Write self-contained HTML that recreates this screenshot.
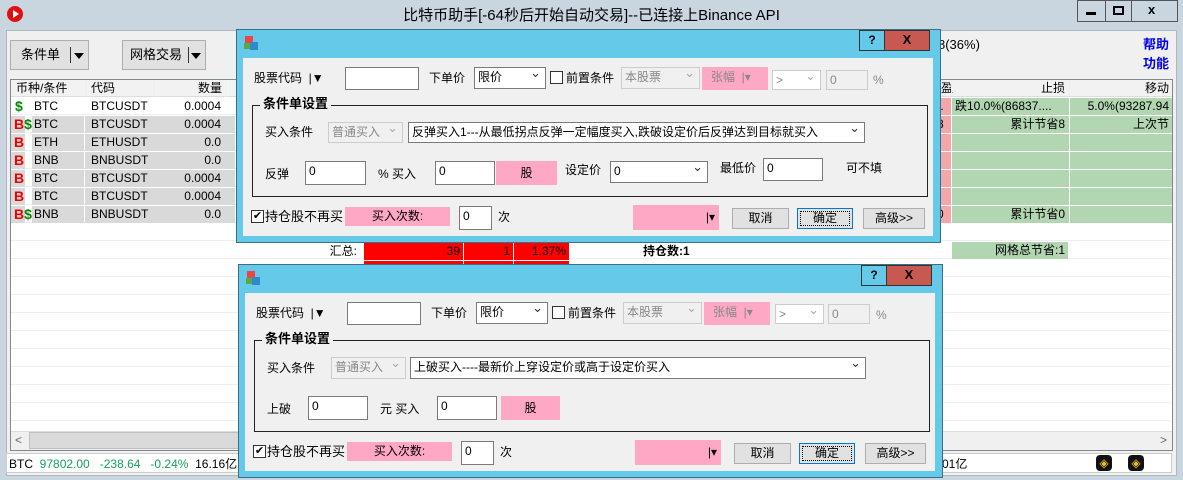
<!DOCTYPE html>
<html><head><meta charset="utf-8"><style>
*{box-sizing:border-box;margin:0;padding:0}
body{width:1183px;height:480px;overflow:hidden;background:#c9d6df;font-family:"Liberation Sans","Noto Sans CJK SC",sans-serif;font-size:12px;color:#000;position:relative}
.a{position:absolute}
.t{position:absolute;white-space:nowrap;line-height:14px}
.inp{position:absolute;background:#fff;border:1px solid #7a7a7a;padding:2px 3px;font-size:12px;line-height:14px}
.sel{position:absolute;background:#fff;border:1px solid #7a7a7a;padding:2px 3px;font-size:12px;line-height:15px}
.sel:after{content:"⌄";position:absolute;right:4px;top:-3px;font-size:13px;color:#333}
.dis{background:#f0f0f0;border-color:#ccc;color:#888}
.dis:after{color:#aaa}
.pink{position:absolute;background:#ffa8c6;text-align:center;line-height:20px}
.btn{position:absolute;background:#e1e1e1;border:1px solid #adadad;text-align:center;line-height:19px}
.cell{position:absolute;height:18px;line-height:18px;padding:0 3px;white-space:nowrap;overflow:hidden}
.dlg{position:absolute;background:#65c9e9;border:1px solid #3a6f88}
.client{position:absolute;background:#f0f0f0}
.grp{position:absolute;border:1px solid #222}
.chk{position:absolute;width:13px;height:13px;border:1px solid #333;background:#fff;font-size:11px;line-height:11px;text-align:center}
</style></head><body>
<!-- title bar -->
<div class="a" style="left:7px;top:6px;width:16px;height:16px;border-radius:50%;background:#e01010"></div>
<div class="a" style="left:13px;top:10px;width:0;height:0;border-left:6px solid #fff;border-top:4px solid transparent;border-bottom:4px solid transparent"></div>
<div class="t" style="left:0;width:1183px;text-align:center;top:7px;font-size:15px;line-height:18px">比特币助手[-64秒后开始自动交易]--已连接上Binance API</div>
<div class="a" style="left:1077px;top:0;width:101px;height:22px;border:1px solid #555;background:#c9d6df"></div>
<div class="a" style="left:1105px;top:0;width:1px;height:22px;background:#555"></div>
<div class="a" style="left:1131px;top:0;width:1px;height:22px;background:#555"></div>
<div class="a" style="left:1086px;top:12px;width:10px;height:3px;background:#000"></div>
<div class="a" style="left:1113px;top:6px;width:11px;height:9px;border:2px solid #000"></div>
<div class="t" style="left:1148px;top:3px;font-weight:bold;font-size:13px">x</div>
<!-- client -->
<div class="a" style="left:6px;top:30px;width:1171px;height:446px;background:#f0f0f0;border:1px solid #b0b8bd"></div>
<div class="btn" style="left:10px;top:40px;width:79px;height:30px;line-height:28px;text-align:left;padding-left:10px;font-size:13px">条件单<span class="a" style="left:59px;top:6px;width:1px;height:16px;background:#333"></span><span class="a" style="left:63px;top:12px;border-top:6px solid #000;border-left:5px solid transparent;border-right:5px solid transparent"></span></div>
<div class="btn" style="left:122px;top:40px;width:84px;height:30px;line-height:28px;text-align:left;padding-left:7px;font-size:13px">网格交易<span class="a" style="left:65px;top:6px;width:1px;height:16px;background:#333"></span><span class="a" style="left:68px;top:12px;border-top:6px solid #000;border-left:5px solid transparent;border-right:5px solid transparent"></span></div>
<div class="t" style="left:938px;top:38px;font-size:13px">8(36%)</div>
<div class="t" style="left:1143px;top:38px;color:#0000ee;font-weight:bold;font-size:13px">帮助</div>
<div class="t" style="left:1143px;top:57px;color:#0000ee;font-weight:bold;font-size:13px">功能</div>
<!-- grid -->
<div class="a" style="left:10px;top:79px;width:1163px;height:372px;background:#fff;border:1px solid #828790"></div>
<div class="a" style="left:11px;top:80px;width:1161px;height:17px;background:#f2f2f2;border-bottom:1px solid #ddd"></div>
<div class="cell" style="left:13px;top:79px">币种/条件</div>
<div class="cell" style="left:88px;top:79px">代码</div>
<div class="cell" style="left:153px;top:79px;width:72px;text-align:right">数量</div>
<div class="cell" style="left:938px;top:79px">盈</div>
<div class="cell" style="left:952px;top:79px;width:116px;text-align:right">止损</div>
<div class="cell" style="left:1070px;top:79px;width:102px;text-align:right">移动</div>
<div class="a" style="left:85px;top:80px;width:1px;height:350px;background:#eee"></div>
<div class="a" style="left:154px;top:80px;width:1px;height:350px;background:#eee"></div>
<div class="a" style="left:225px;top:80px;width:1px;height:350px;background:#eee"></div>
<div class="a" style="left:951px;top:80px;width:1px;height:350px;background:#eee"></div>
<div class="a" style="left:1069px;top:80px;width:1px;height:350px;background:#eee"></div>
<div class="a" style="left:11px;top:97px;width:1160px;height:333px;background:repeating-linear-gradient(#fff 0 17px,#eee 17px 18px)"></div>
<!-- rows -->
<div class="a" style="left:85px;top:116px;width:150px;height:108px;background:repeating-linear-gradient(#d9d9d9 0 17px,#fff 17px 18px)"></div>
<div class="a" style="left:11px;top:116px;width:14px;height:108px;background:repeating-linear-gradient(#d9d9d9 0 17px,#fff 17px 18px)"></div>
<div class="a" style="left:32px;top:116px;width:52px;height:108px;background:repeating-linear-gradient(#d9d9d9 0 17px,#fff 17px 18px)"></div>
<div class="a" style="left:940px;top:98px;width:11px;height:126px;background:repeating-linear-gradient(#f4a6a9 0 17px,#fff 17px 18px)"></div>
<div class="a" style="left:952px;top:98px;width:220px;height:126px;background:repeating-linear-gradient(#b2d5b2 0 17px,#fff 17px 18px)"></div>
<div class="a" style="left:1069px;top:98px;width:1px;height:126px;background:#fff"></div>
<div class="a" style="left:952px;top:242px;width:116px;height:17px;background:#b2d5b2"></div>
<div class="cell" style="left:952px;top:241px;width:116px;text-align:right">网格总节省:1</div>
<div class="cell" style="left:952px;top:97px;width:118px;">跌10.0%(86837....</div>
<div class="cell" style="left:1070px;top:97px;width:102px;text-align:right">5.0%(93287.94</div>
<div class="cell" style="left:952px;top:115px;width:116px;text-align:right">累计节省8</div>
<div class="cell" style="left:1070px;top:115px;width:102px;text-align:right">上次节</div>
<div class="cell" style="left:952px;top:205px;width:116px;text-align:right">累计节省0</div>
<div class="cell" style="left:934px;top:115px">8</div>
<div class="cell" style="left:934px;top:205px">0</div>
<div class="cell" style="left:934px;top:97px">..</div>

<div class="t" style="left:15px;top:99px;color:#080;font-weight:bold;font-size:14px">$</div>
<div class="t" style="left:14px;top:117px;color:#e00;font-weight:bold;font-size:14px">B<span style="color:#080">$</span></div>
<div class="t" style="left:14px;top:135px;color:#e00;font-weight:bold;font-size:14px">B</div>
<div class="t" style="left:14px;top:153px;color:#e00;font-weight:bold;font-size:14px">B</div>
<div class="t" style="left:14px;top:171px;color:#e00;font-weight:bold;font-size:14px">B</div>
<div class="t" style="left:14px;top:189px;color:#e00;font-weight:bold;font-size:14px">B</div>
<div class="t" style="left:14px;top:207px;color:#e00;font-weight:bold;font-size:14px">B<span style="color:#080">$</span></div>
<div class="cell" style="left:31px;top:97px">BTC</div><div class="cell" style="left:88px;top:97px">BTCUSDT</div><div class="cell" style="left:154px;top:97px;width:70px;text-align:right">0.0004</div>
<div class="cell" style="left:31px;top:115px">BTC</div><div class="cell" style="left:88px;top:115px">BTCUSDT</div><div class="cell" style="left:154px;top:115px;width:70px;text-align:right">0.0004</div>
<div class="cell" style="left:31px;top:133px">ETH</div><div class="cell" style="left:88px;top:133px">ETHUSDT</div><div class="cell" style="left:154px;top:133px;width:70px;text-align:right">0.0</div>
<div class="cell" style="left:31px;top:151px">BNB</div><div class="cell" style="left:88px;top:151px">BNBUSDT</div><div class="cell" style="left:154px;top:151px;width:70px;text-align:right">0.0</div>
<div class="cell" style="left:31px;top:169px">BTC</div><div class="cell" style="left:88px;top:169px">BTCUSDT</div><div class="cell" style="left:154px;top:169px;width:70px;text-align:right">0.0004</div>
<div class="cell" style="left:31px;top:187px">BTC</div><div class="cell" style="left:88px;top:187px">BTCUSDT</div><div class="cell" style="left:154px;top:187px;width:70px;text-align:right">0.0004</div>
<div class="cell" style="left:31px;top:205px">BNB</div><div class="cell" style="left:88px;top:205px">BNBUSDT</div><div class="cell" style="left:154px;top:205px;width:70px;text-align:right">0.0</div>
<!-- summary -->
<div class="cell" style="left:300px;top:242px;width:60px;text-align:right">汇总:</div>
<div class="a" style="left:364px;top:243px;width:205px;height:17px;background:#f00"></div>
<div class="a" style="left:364px;top:261px;width:205px;height:6px;background:#f00"></div>
<div class="a" style="left:463px;top:243px;width:1px;height:24px;background:#fff"></div>
<div class="a" style="left:513px;top:243px;width:1px;height:24px;background:#fff"></div>
<div class="cell" style="left:364px;top:242px;width:99px;text-align:right">39</div>
<div class="cell" style="left:464px;top:242px;width:49px;text-align:right">1</div>
<div class="cell" style="left:514px;top:242px;width:55px;text-align:right">1.37%</div>
<div class="cell" style="left:640px;top:242px;font-weight:bold">持仓数:1</div>
<!-- scrollbar -->
<div class="a" style="left:11px;top:431px;width:1161px;height:19px;background:#f0f0f0;border-top:1px solid #ddd"></div>
<div class="a" style="left:29px;top:432px;width:860px;height:17px;background:#dadada;border:1px solid #c0c0c0"></div>
<div class="t" style="left:15px;top:433px;color:#666">&lt;</div>
<div class="t" style="left:1160px;top:433px;color:#666">&gt;</div>
<!-- status bar -->
<div class="a" style="left:6px;top:453px;width:1166px;height:20px;background:#fff;border:1px solid #ccc"></div>
<div class="t" style="left:9px;top:457px">BTC <span style="color:#17a05a">&nbsp;97802.00 &nbsp;&nbsp;-238.64 &nbsp;&nbsp;-0.24%</span> &nbsp;16.16亿</div>
<div class="t" style="left:932px;top:457px">2.01亿</div>
<div class="a" style="left:1096px;top:455px;width:16px;height:16px;background:#111;border-radius:4px;color:#f3ba2f;font-size:12px;line-height:16px;text-align:center">◈</div>
<div class="a" style="left:1128px;top:455px;width:16px;height:16px;background:#111;border-radius:4px;color:#f3ba2f;font-size:12px;line-height:16px;text-align:center">◈</div>

<!-- dialog 1 -->
<div class="dlg" style="left:236px;top:29px;width:705px;height:214px"></div>
<div class="a" style="left:245px;top:36px;width:8px;height:8px;background:#e44"></div><div class="a" style="left:250px;top:42px;width:8px;height:8px;background:#38c"></div><div class="a" style="left:244px;top:43px;width:6px;height:6px;background:#5a4"></div>
<div class="a" style="left:859px;top:30px;width:26px;height:21px;background:#65c9e9;border:1px solid #333;font-weight:bold;text-align:center;line-height:19px">?</div>
<div class="a" style="left:884px;top:30px;width:46px;height:21px;background:#c75950;border:1px solid #333;font-weight:bold;text-align:center;line-height:18px;font-size:13px">X</div>
<div class="client" style="left:243px;top:58px;width:690px;height:178px"></div>
<div class="t" style="left:254px;top:71px">股票代码 &nbsp;|▼</div>
<div class="inp" style="left:345px;top:67px;width:74px;height:23px"></div>
<div class="t" style="left:429px;top:71px">下单价</div>
<div class="sel" style="left:474px;top:67px;width:72px;height:22px">限价</div>
<div class="chk" style="left:550px;top:71px"></div>
<div class="t" style="left:566px;top:71px">前置条件</div>
<div class="sel dis" style="left:621px;top:67px;width:79px;height:22px">本股票</div>
<div class="pink" style="left:702px;top:67px;width:66px;height:23px;color:#888;text-align:left;padding-left:9px">张幅 &nbsp;|▾</div>
<div class="sel dis" style="left:772px;top:70px;width:49px;height:20px;background:#fff">&gt;</div>
<div class="inp dis" style="left:826px;top:70px;width:42px;height:20px">0</div>
<div class="t" style="left:873px;top:73px;color:#888">%</div>
<div class="grp" style="left:252px;top:105px;width:676px;height:92px"></div>
<div class="t" style="left:260px;top:97px;background:#f0f0f0;font-weight:bold;font-size:13px;padding:0 3px">条件单设置</div>
<div class="t" style="left:265px;top:125px">买入条件</div>
<div class="sel dis" style="left:328px;top:122px;width:75px;height:21px;background:#f0f0f0">普通买入</div>
<div class="sel" style="left:408px;top:122px;width:457px;height:21px">反弹买入1---从最低拐点反弹一定幅度买入,跌破设定价后反弹达到目标就买入</div>
<div class="t" style="left:265px;top:167px">反弹</div>
<div class="inp" style="left:305px;top:161px;width:61px;height:24px">0</div>
<div class="t" style="left:378px;top:167px">% 买入</div>
<div class="inp" style="left:435px;top:161px;width:60px;height:24px">0</div>
<div class="pink" style="left:496px;top:161px;width:61px;height:24px;line-height:24px">股</div>
<div class="t" style="left:565px;top:163px">设定价</div>
<div class="sel" style="left:610px;top:161px;width:98px;height:22px">0</div>
<div class="t" style="left:720px;top:161px">最低价</div>
<div class="inp" style="left:763px;top:158px;width:60px;height:23px">0</div>
<div class="t" style="left:846px;top:161px">可不填</div>
<div class="chk" style="left:251px;top:210px">✔</div>
<div class="t" style="left:265px;top:210px;font-size:13px">持仓股不再买</div>
<div class="pink" style="left:345px;top:207px;width:105px;height:19px;line-height:19px">买入次数:</div>
<div class="inp" style="left:459px;top:206px;width:33px;height:24px">0</div>
<div class="t" style="left:498px;top:210px">次</div>
<div class="pink" style="left:633px;top:205px;width:86px;height:25px;text-align:right;padding-right:4px;line-height:25px">|▾</div>
<div class="btn" style="left:732px;top:208px;width:57px;height:21px">取消</div>
<div class="btn" style="left:797px;top:208px;width:56px;height:21px;border:1px solid #0078d7;outline:1px dotted #000;outline-offset:-4px">确定</div>
<div class="btn" style="left:863px;top:208px;width:62px;height:21px">高级&gt;&gt;</div>

<!-- dialog 2 -->
<div class="dlg" style="left:238px;top:264px;width:705px;height:214px"></div>
<div class="a" style="left:247px;top:271px;width:8px;height:8px;background:#e44"></div><div class="a" style="left:252px;top:277px;width:8px;height:8px;background:#38c"></div><div class="a" style="left:246px;top:278px;width:6px;height:6px;background:#5a4"></div>
<div class="a" style="left:861px;top:265px;width:26px;height:21px;background:#65c9e9;border:1px solid #333;font-weight:bold;text-align:center;line-height:19px">?</div>
<div class="a" style="left:886px;top:265px;width:46px;height:21px;background:#c75950;border:1px solid #333;font-weight:bold;text-align:center;line-height:18px;font-size:13px">X</div>
<div class="client" style="left:245px;top:293px;width:690px;height:178px"></div>
<div class="t" style="left:256px;top:306px">股票代码 &nbsp;|▼</div>
<div class="inp" style="left:347px;top:302px;width:74px;height:23px"></div>
<div class="t" style="left:431px;top:306px">下单价</div>
<div class="sel" style="left:476px;top:302px;width:72px;height:22px">限价</div>
<div class="chk" style="left:552px;top:306px"></div>
<div class="t" style="left:568px;top:306px">前置条件</div>
<div class="sel dis" style="left:623px;top:302px;width:79px;height:22px">本股票</div>
<div class="pink" style="left:704px;top:302px;width:66px;height:23px;color:#888;text-align:left;padding-left:9px">张幅 &nbsp;|▾</div>
<div class="sel dis" style="left:775px;top:304px;width:49px;height:20px;background:#fff">&gt;</div>
<div class="inp dis" style="left:828px;top:304px;width:42px;height:20px">0</div>
<div class="t" style="left:876px;top:308px;color:#888">%</div>
<div class="grp" style="left:254px;top:340px;width:676px;height:92px"></div>
<div class="t" style="left:262px;top:332px;background:#f0f0f0;font-weight:bold;font-size:13px;padding:0 3px">条件单设置</div>
<div class="t" style="left:267px;top:361px">买入条件</div>
<div class="sel dis" style="left:331px;top:357px;width:75px;height:22px;background:#f0f0f0">普通买入</div>
<div class="sel" style="left:410px;top:357px;width:456px;height:22px">上破买入----最新价上穿设定价或高于设定价买入</div>
<div class="t" style="left:267px;top:402px">上破</div>
<div class="inp" style="left:308px;top:396px;width:60px;height:24px">0</div>
<div class="t" style="left:380px;top:402px">元 买入</div>
<div class="inp" style="left:437px;top:396px;width:60px;height:24px">0</div>
<div class="pink" style="left:501px;top:396px;width:59px;height:24px;line-height:24px">股</div>
<div class="chk" style="left:253px;top:445px">✔</div>
<div class="t" style="left:267px;top:445px;font-size:13px">持仓股不再买</div>
<div class="pink" style="left:347px;top:442px;width:105px;height:19px;line-height:19px">买入次数:</div>
<div class="inp" style="left:461px;top:441px;width:33px;height:24px">0</div>
<div class="t" style="left:500px;top:445px">次</div>
<div class="pink" style="left:635px;top:440px;width:86px;height:25px;text-align:right;padding-right:4px;line-height:25px">|▾</div>
<div class="btn" style="left:734px;top:443px;width:57px;height:21px">取消</div>
<div class="btn" style="left:799px;top:443px;width:56px;height:21px;border:1px solid #0078d7;outline:1px dotted #000;outline-offset:-4px">确定</div>
<div class="btn" style="left:865px;top:443px;width:61px;height:21px">高级&gt;&gt;</div>
</body></html>
